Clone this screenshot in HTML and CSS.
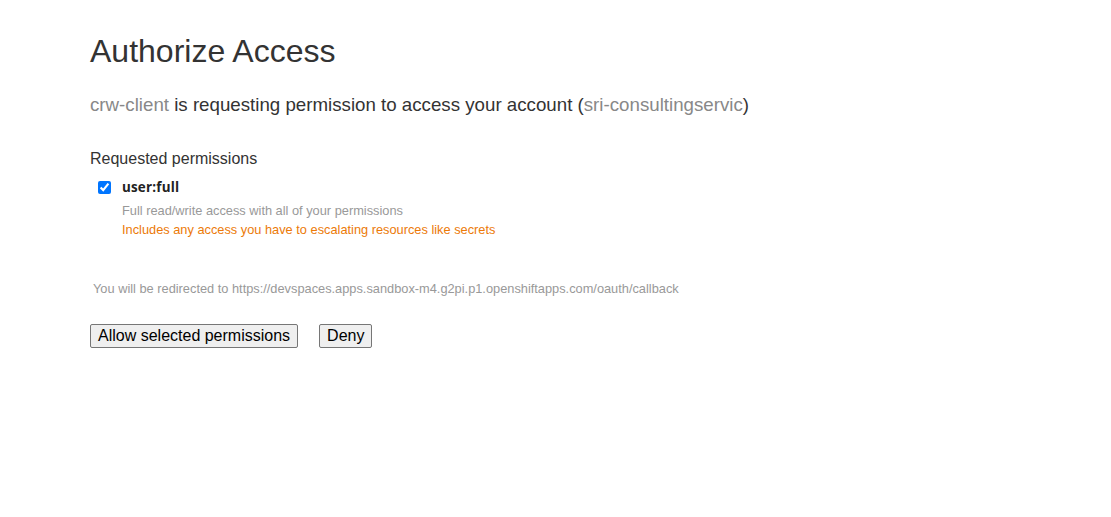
FILE: index.html
```html
<!DOCTYPE html>
<html>
<head>
<meta charset="utf-8">
<title>Authorize Access</title>
<link rel="stylesheet" href="styles.css">
</head>
<body>
<div class="page">
  <h1 class="title">Authorize Access</h1>
  <p class="lead"><span class="muted">crw-client</span> is requesting permission to access your account (<span class="muted">sri-consultingservic</span>)</p>
  <form class="form">
    <h4 class="section">Requested permissions</h4>
    <div class="perm">
      <label class="perm-row">
        <input type="checkbox" class="check" checked>
        <span class="perm-name">user:full</span>
      </label>
      <div class="perm-desc">
        <div class="desc">Full read/write access with all of your permissions</div>
        <div class="warn">Includes any access you have to escalating resources like secrets</div>
      </div>
    </div>
    <div class="redirect">You will be redirected to https://devspaces.apps.sandbox-m4.g2pi.p1.openshiftapps.com/oauth/callback</div>
    <div class="actions">
      <button type="button" class="btn">Allow selected permissions</button>
      <button type="button" class="btn">Deny</button>
    </div>
  </form>
</div>
</body>
</html>
```

FILE: styles.css
```css
html, body {
  margin: 0;
  padding: 0;
  background: #fff;
}
body {
  font-family: "Liberation Sans", Arial, sans-serif;
  color: #333;
}
.page {
  padding: 31px 90px 0 90px;
}
.title {
  font-size: 32px;
  font-weight: 400;
  line-height: 40px;
  margin: 0;
  color: #333;
}
.lead {
  font-size: 18.72px;
  line-height: 25px;
  margin: 21px 0 0 0;
}
.muted {
  color: #888;
}
.form {
  margin: 0;
}
.section {
  font-size: 16px;
  font-weight: 400;
  line-height: 20px;
  margin: 32px 0 0 0;
}
.perm {
  margin-top: 9px;
  padding-left: 8px;
}
.perm-row {
  display: flex;
  align-items: center;
  gap: 11px;
  height: 18px;
}
.check {
  margin: 0;
  width: 13px;
  height: 13px;
  accent-color: #0075ff;
}
.perm-name {
  font-family: "Open Sans", "DejaVu Sans", sans-serif;
  font-weight: 700;
  font-size: 13.4px;
  letter-spacing: 0.2px;
  color: #222;
}
.perm-desc {
  padding-left: 24px;
  margin-top: 5px;
  font-size: 12.8px;
  line-height: 19px;
}
.desc {
  color: #999;
}
.warn {
  color: #ec7a08;
}
.redirect {
  margin-top: 42px;
  padding-left: 3px;
  font-size: 12.8px;
  line-height: 16px;
  color: #999;
}
.actions {
  margin-top: 27px;
  display: flex;
  gap: 21px;
}
.btn {
  font-family: "Liberation Sans", Arial, sans-serif;
  font-size: 16px;
  line-height: 18px;
  padding: 2px 7px;
  color: #000;
  background: #efefef;
  border: 1px solid #767676;
  border-radius: 2px;
  margin: 0;
}
```
